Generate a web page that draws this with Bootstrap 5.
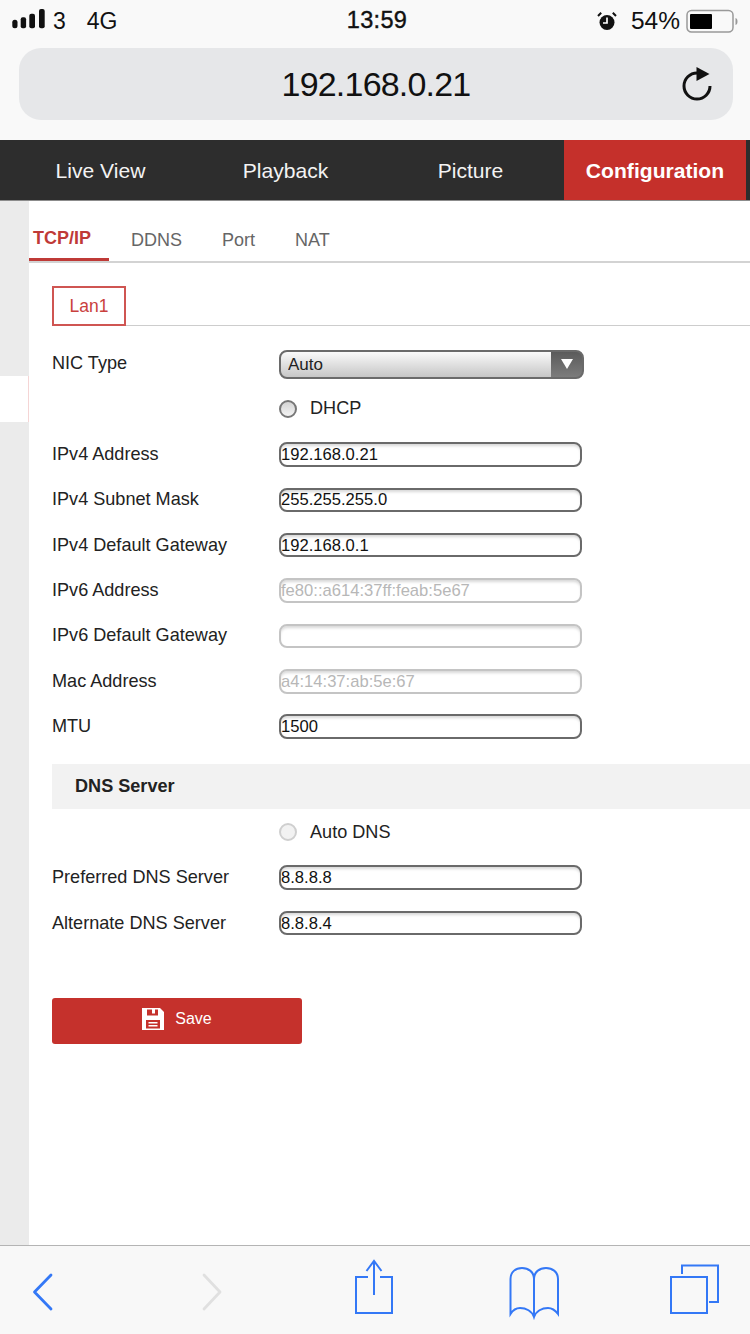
<!DOCTYPE html>
<html lang="en">
<head>
<meta charset="utf-8">
<title>192.168.0.21</title>
<link href="https://cdn.jsdelivr.net/npm/bootstrap@5.3.0/dist/css/bootstrap.min.css" rel="stylesheet">
<style>
html,body{height:1334px;overflow:hidden}
body{width:750px;font-family:"Liberation Sans",Arial,sans-serif;background:#fff;color:#1f1f1f}
.ios-top{height:140px;background:#f9f9f9;color:#111}
.status-row{height:40px;padding:2px 12px 0 12px;font-size:23px}
.status-left{width:252px}
.status-right{width:248px}
.signal-svg{margin-right:8px}
.net-type{margin-left:21px}
.status-clock{font-size:23.5px;font-weight:500;-webkit-text-stroke:.4px #111;letter-spacing:.3px}
.batt-pct{font-size:24.5px;margin-right:6px}
.alarm-svg{margin-right:14px}
.url-box{height:72px;margin:8px 17px 0 19px;background:#e6e7e9;border-radius:22px;font-size:34px;padding:0 20px}
.url-text{letter-spacing:-.8px}
.url-side{flex:1 1 0}
.cam-nav{height:61px;background:#2d2d2d;padding-left:8px;border-bottom:1px solid #8c8c8c}
.cam-nav a{width:185px;color:#f3f3f3;font-size:21.1px;text-decoration:none;padding-top:1px}
.cam-nav a.on{width:182px;margin-left:1px;background:#c5302b;color:#fff;font-weight:700}
.page-body{height:1044px}
.side-strip{width:29px;background:#ebebeb;padding-top:175px}
.side-slot{height:46px;background:#fff;border-right:1px solid #f5d5d5}
.main-pane{min-width:0}
.tab-row{height:62px;border-bottom:2px solid #d3d3d3}
.tab-row a{font-size:18px;color:#666;text-decoration:none;padding-top:26px;height:60px}
.tab-row a.on{width:80px;padding:23.5px 0 0 4px;color:#bf3a37;font-weight:700;border-bottom:3px solid #bf3a37;height:60px;margin-right:22px}
.tab-mid{margin-right:40px}
.lan-row{margin:23px 0 0 23px;height:40px;border-bottom:1px solid #cdcdcd}
.lan-tab{width:74px;height:40px;border:2px solid #cf5552;color:#c9403d;font-size:17.5px;background:#fff}
.form-pane{padding-left:23px}
.fld-row{height:45.4px;font-size:18.1px;color:#222}
.fld-label{width:227px}
.sel-row{margin-top:15px;height:45.3px}
.cam-select.form-select{width:305px;height:29px;margin-top:1px;padding:0 0 2px 7px;font-size:17px;color:#222;border:2px solid #6a6a6a;border-radius:8px;box-shadow:none;
 background:url("data:image/svg+xml,%3Csvg xmlns='http://www.w3.org/2000/svg' width='12' height='10'%3E%3Cpath d='M0 0h12L6 10z' fill='%23fff'/%3E%3C/svg%3E") no-repeat right 9px center,linear-gradient(#5b5b5b,#7c7c7c) no-repeat right center/31px 100%,linear-gradient(#fafafa,#c6c6c6)}
.cam-check{width:18px;height:18px;margin:0 13px 0 0;border:2px solid #777;border-radius:50%;background:linear-gradient(#d4d4d4,#f3f3f3)}
.cam-check.pale{border-color:#cfcfcf;background:#f2f2f2}
.cam-input.form-control{width:303px;height:24.5px;min-height:0;padding:1px 0 0 0;font-size:16.6px;line-height:1;color:#111;border:2px solid #6a6a6a;border-radius:8px;box-shadow:inset 0 3px 3px -1px #d8d8d8;background:#fff}
.cam-input.form-control:disabled{color:#b7b7b7;border-color:#c4c4c4;background:#fff;opacity:1}
.dns-head{height:45px;margin:14.2px 0 0;padding:1px 0 0 23px;background:#f2f2f2;font-size:18.1px;font-weight:700;color:#222}
.dns-check{margin-top:1px}
.save-btn.btn{width:250px;height:46px;margin-top:52px;background:#c5312c;border:0;border-radius:3px;color:#fff;font-size:16px;padding:0 0 4px 0;gap:11px}
.ios-bottom{height:89px;background:#f8f8f8;border-top:1px solid #b4b4b4}
.ios-bottom svg{display:block}
</style>
</head>
<body>
<header class="ios-top">
  <div class="status-row d-flex align-items-center justify-content-between">
    <div class="status-left d-flex align-items-center">
      <svg class="signal-svg" width="33" height="30" viewBox="0 0 33 30" aria-hidden="true"><rect x=".3" y="13.700" width="5.200" height="8.600" rx="2.500" fill="#111"/><rect x="8.700" y="11.300" width="5.400" height="11" rx="2" fill="#111"/><rect x="17.300" y="7.700" width="5.700" height="14.600" rx="2" fill="#111"/><rect x="27" y="3" width="5.700" height="19.300" rx="2" fill="#111"/></svg>
      <span>3</span><span class="net-type">4G</span>
    </div>
    <div class="status-clock">13:59</div>
    <div class="status-right d-flex align-items-center justify-content-end">
      <svg class="alarm-svg" width="20" height="20" viewBox="0 0 20 20" aria-hidden="true"><circle cx="10" cy="11.500" r="7.500" fill="#111"/><path d="M10 6.500v5.500H6" fill="none" stroke="#fff" stroke-width="1.700"/><path d="M1 5 4.200 1.800M19 5 15.800 1.800" stroke="#111" stroke-width="2"/></svg>
      <span class="batt-pct">54%</span>
      <svg width="52" height="24" viewBox="0 0 52 24" aria-hidden="true"><rect x="1" y="1.500" width="46" height="21.500" rx="4.500" fill="none" stroke="#999" stroke-width="1.500"/><rect x="4" y="5" width="22" height="15" rx="1" fill="#000"/><path d="M49.500 9c1.500.7 2 1.700 2 3.500s-.5 2.800-2 3.500z" fill="#999"/></svg>
    </div>
  </div>
  <div class="url-box d-flex align-items-center">
    <span class="url-side"></span>
    <span class="url-text">192.168.0.21</span>
    <span class="url-side d-flex justify-content-end">
      <svg width="32" height="40" viewBox="0 0 32 40" aria-hidden="true"><path d="M16 9A13 13 0 1 0 29 22" fill="none" stroke="#111" stroke-width="3"/><path d="M15.500 3v14l13-7z" fill="#111"/></svg>
    </span>
  </div>
</header>

<nav class="cam-nav d-flex">
  <a href="#" class="d-flex align-items-center justify-content-center">Live View</a>
  <a href="#" class="d-flex align-items-center justify-content-center">Playback</a>
  <a href="#" class="d-flex align-items-center justify-content-center">Picture</a>
  <a href="#" class="on d-flex align-items-center justify-content-center">Configuration</a>
</nav>

<div class="page-body d-flex">
  <aside class="side-strip flex-shrink-0"><div class="side-slot"></div></aside>
  <main class="main-pane flex-fill">
    <div class="tab-row d-flex">
      <a href="#" class="on">TCP/IP</a>
      <a href="#" class="tab-mid">DDNS</a>
      <a href="#" class="tab-mid">Port</a>
      <a href="#">NAT</a>
    </div>
    <div class="lan-row d-flex"><div class="lan-tab d-flex align-items-center justify-content-center">Lan1</div></div>
    <form class="form-pane" onsubmit="return false">
      <div class="fld-row sel-row d-flex align-items-center">
        <label class="fld-label">NIC Type</label>
        <select class="cam-select form-select"><option>Auto</option></select>
      </div>
      <div class="fld-row d-flex align-items-center">
        <span class="fld-label"></span>
        <input class="form-check-input cam-check" type="radio"><label>DHCP</label>
      </div>
      <div class="fld-row d-flex align-items-center"><label class="fld-label">IPv4 Address</label><input class="form-control cam-input" value="192.168.0.21"></div>
      <div class="fld-row d-flex align-items-center"><label class="fld-label">IPv4 Subnet Mask</label><input class="form-control cam-input" value="255.255.255.0"></div>
      <div class="fld-row d-flex align-items-center"><label class="fld-label">IPv4 Default Gateway</label><input class="form-control cam-input" value="192.168.0.1"></div>
      <div class="fld-row d-flex align-items-center"><label class="fld-label">IPv6 Address</label><input class="form-control cam-input" disabled value="fe80::a614:37ff:feab:5e67"></div>
      <div class="fld-row d-flex align-items-center"><label class="fld-label">IPv6 Default Gateway</label><input class="form-control cam-input" disabled value=""></div>
      <div class="fld-row d-flex align-items-center"><label class="fld-label">Mac Address</label><input class="form-control cam-input" disabled value="a4:14:37:ab:5e:67"></div>
      <div class="fld-row d-flex align-items-center"><label class="fld-label">MTU</label><input class="form-control cam-input" value="1500"></div>
      <div class="dns-head d-flex align-items-center">DNS Server</div>
      <div class="fld-row dns-check d-flex align-items-center">
        <span class="fld-label"></span>
        <input class="form-check-input cam-check pale" type="radio"><label>Auto DNS</label>
      </div>
      <div class="fld-row d-flex align-items-center"><label class="fld-label">Preferred DNS Server</label><input class="form-control cam-input" value="8.8.8.8"></div>
      <div class="fld-row d-flex align-items-center"><label class="fld-label">Alternate DNS Server</label><input class="form-control cam-input" value="8.8.8.4"></div>
      <button class="save-btn btn d-flex align-items-center justify-content-center" type="button">
        <svg width="22" height="22" viewBox="0 0 22 22" aria-hidden="true"><path fill-rule="evenodd" fill="#fff" d="M0 0h18l4 4v18H0zM5 1.500v6h11v-6h-3v4h-3v-4zM4 12v8.500h14V12zM6.500 14h9v1.500h-9zM6.500 17h9v1.500h-9z"/></svg>
        <span>Save</span>
      </button>
    </form>
  </main>
</div>

<footer class="ios-bottom">
  <svg width="750" height="88" viewBox="0 0 750 88" fill="none" aria-hidden="true">
    <path d="M51 29 34.500 46 51 63" stroke="#3478f6" stroke-width="2.800" stroke-linecap="round" stroke-linejoin="round"/>
    <path d="M204 29l16 17-16 17" stroke="#e0e0e0" stroke-width="2.800" stroke-linecap="round" stroke-linejoin="round"/>
    <g stroke="#3478f6" stroke-width="2">
      <path d="M368 31h-12v36h36V31h-12"/>
      <path d="M374 49V15M366.500 25 374 15l7.500 10"/>
      <path d="M510.500 68V33c0-7 5-11 11.500-11s12 4 12 11c0-7 5.500-11 12-11s12 4 12 11v35c-3-4-6-6-10-6-6 0-12 3-14 9-2-6-8-9-14-9-4 0-7 2-9.500 6zM534 33v38"/>
      <path d="M671 31h36v36h-36z"/>
      <path d="M682 28v-8.500h36v36.500h-9"/>
    </g>
  </svg>
</footer>
<script src="https://cdn.jsdelivr.net/npm/bootstrap@5.3.0/dist/js/bootstrap.bundle.min.js"></script>
</body>
</html>
